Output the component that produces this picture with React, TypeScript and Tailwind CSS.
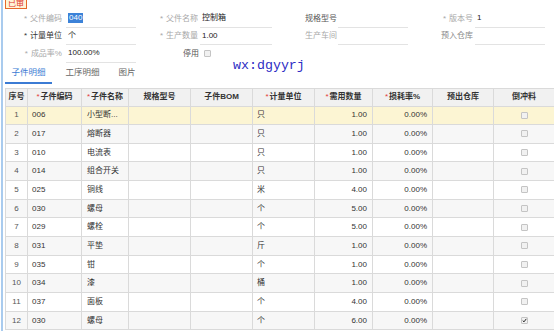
const font = { fontFamily: '"Liberation Sans", "Noto Sans CJK SC", sans-serif' };

const cols = 'grid grid-cols-[22px_54px_47px_62px_62px_62px_58px_60px_61px_61px]';

const rows = [
  ['1', '006', '小型断...', '只', '1.00', false],
  ['2', '017', '熔断器', '只', '1.00', false],
  ['3', '010', '电流表', '只', '1.00', false],
  ['4', '014', '组合开关', '只', '1.00', false],
  ['5', '025', '铜线', '米', '4.00', false],
  ['6', '030', '螺母', '个', '5.00', false],
  ['7', '029', '螺栓', '个', '5.00', false],
  ['8', '031', '平垫', '斤', '1.00', false],
  ['9', '035', '钳', '个', '1.00', false],
  ['10', '034', '漆', '桶', '1.00', false],
  ['11', '037', '面板', '个', '4.00', false],
  ['12', '030', '螺母', '个', '6.00', true],
] as const;

const Label = ({ w, text, star, dark }: { w: string; text: string; star?: boolean; dark?: string }) => (
  <div className={`${w} shrink-0 text-right ${dark ?? 'text-[#a8a8a8]'}`}>
    {star && <span className="mr-[3px]">*</span>}
    {text}
  </div>
);

const Input = ({ w, ml, children }: { w: string; ml: string; children?: React.ReactNode }) => (
  <div className={`${w} ${ml} shrink-0 h-full border-b border-[#e3e3e3] pl-[2px] flex items-center text-[#222]`}>
    {children}
  </div>
);

const Check = ({ on }: { on?: boolean }) => (
  <div className="w-[7px] h-[7px] border border-[#c4c4c4] bg-[#f1f1f1] rounded-[1px] flex items-center justify-center">
    {on && (
      <svg width="7" height="7" viewBox="0 0 7 7">
        <path d="M1 3.6 L2.8 5.4 L6 1.2" stroke="#222" strokeWidth="1.4" fill="none" />
      </svg>
    )}
  </div>
);

const Head = ({ text, star }: { text: string; star?: boolean }) => (
  <div className="h-[18px] border-r border-b border-[#dadada] flex items-center justify-center font-bold text-[#333]">
    {star && <span className="text-[#e23b3b] font-normal mr-[1px]">*</span>}
    {text}
  </div>
);

export default function App() {
  return (
    <div style={font} className="w-[554px] h-[331px] overflow-hidden bg-white relative text-[8px] leading-none">
      <div className="ml-[1px] h-full border-l-2 border-[#a9cbee] flex flex-col">
        {/* stamp */}
        <div className="ml-[2px] w-[22px] h-[9px] border-x border-b border-[#e6692a] bg-[#fff4d6] overflow-hidden flex items-end justify-center">
          <span className="text-[#e0302a] text-[8px] leading-[8px]">已审</span>
        </div>

        {/* form */}
        <div className="mt-[1px] flex flex-col">
          <div className="flex items-center h-[17.5px]">
            <Label w="w-[59px]" text="父件编码" star />
            <Input w="w-[70px]" ml="ml-[4px]">
              <span className="bg-[#3c82d8] text-white px-[1px] py-[1px]">040</span>
            </Input>
            <Label w="w-[62px]" text="父件名称" star />
            <Input w="w-[72px]" ml="ml-[2px]">控制箱</Input>
            <Label w="w-[65px]" text="规格型号" dark="text-[#555]" />
            <Input w="w-[70px]" ml="ml-[1px]" />
            <Label w="w-[65px]" text="版本号" star />
            <Input w="w-[70px]" ml="ml-[2px]">1</Input>
          </div>
          <div className="flex items-center h-[17.5px]">
            <Label w="w-[59px]" text="计量单位" star dark="text-[#333]" />
            <Input w="w-[70px]" ml="ml-[4px]">个</Input>
            <Label w="w-[62px]" text="生产数量" star />
            <Input w="w-[72px]" ml="ml-[2px]">1.00</Input>
            <Label w="w-[65px]" text="生产车间" />
            <Input w="w-[70px]" ml="ml-[1px]" />
            <Label w="w-[65px]" text="预入仓库" dark="text-[#888]" />
            <Input w="w-[70px]" ml="ml-[2px]" />
          </div>
          <div className="flex items-center h-[17.5px]">
            <Label w="w-[59px]" text="成品率%" star />
            <Input w="w-[70px]" ml="ml-[4px]">100.00%</Input>
            <Label w="w-[63px]" text="停用" dark="text-[#555]" />
            <div className="ml-[5px]">
              <Check />
            </div>
          </div>
        </div>

        {/* tabs */}
        <div className="mt-[1px] h-[20px] flex items-stretch text-[8.5px]">
          <div className="ml-[2px] w-[47px] flex items-center justify-center text-[#3b7bd4] border-b-2 border-[#3b7bd4]">
            子件明细
          </div>
          <div className="ml-[7px] w-[47px] flex items-center justify-center text-[#666] pb-[2px]">工序明细</div>
          <div className="ml-[6px] w-[30px] flex items-center justify-center text-[#666] pb-[2px]">图片</div>
        </div>

        {/* table */}
        <div className="mt-[4px] ml-[2px] border-t border-l border-[#dadada]">
          <div className={`${cols} bg-[#f1f1f1]`}>
            <Head text="序号" />
            <Head text="子件编码" star />
            <Head text="子件名称" star />
            <Head text="规格型号" />
            <Head text="子件BOM" />
            <Head text="计量单位" star />
            <Head text="需用数量" star />
            <Head text="损耗率%" star />
            <Head text="预出仓库" />
            <Head text="倒冲料" />
          </div>
          {rows.map(([no, code, name, unit, qty, on], i) => (
            <div
              key={no}
              className={`${cols} ${i === 0 ? 'bg-[#fcf5d3]' : i % 2 === 1 ? 'bg-[#f7f7f7]' : 'bg-white'} text-[#333]`}
            >
              <div className="h-[18.67px] border-r border-b border-[#dadada] flex items-center justify-center text-[#555]">{no}</div>
              <div className="border-r border-b border-[#dadada] flex items-center pl-[4px]">{code}</div>
              <div className="border-r border-b border-[#dadada] flex items-center pl-[5px]">{name}</div>
              <div className="border-r border-b border-[#dadada]" />
              <div className="border-r border-b border-[#dadada]" />
              <div className="border-r border-b border-[#dadada] flex items-center pl-[4px]">{unit}</div>
              <div className="border-r border-b border-[#dadada] flex items-center justify-end pr-[5px]">{qty}</div>
              <div className="border-r border-b border-[#dadada] flex items-center justify-end pr-[5px]">0.00%</div>
              <div className="border-r border-b border-[#dadada]" />
              <div className="border-r border-b border-[#dadada] flex items-center justify-center">
                <Check on={on} />
              </div>
            </div>
          ))}
        </div>
      </div>

      {/* watermark */}
      <div
        className="absolute left-[233px] top-[59px] text-[13.3px] leading-none text-[#2d2dc4] pointer-events-none"
        style={{ fontFamily: '"Liberation Mono", monospace' }}
      >
        wx:dgyyrj
      </div>
    </div>
  );
}
